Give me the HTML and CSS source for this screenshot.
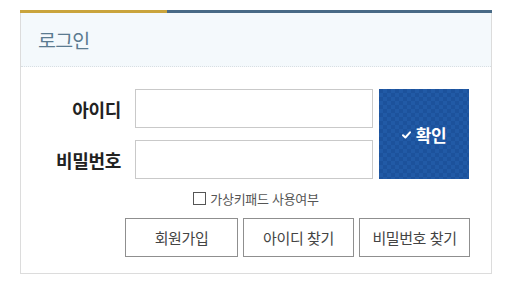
FILE: index.html
```html
<!DOCTYPE html>
<html lang="ko">
<head>
<meta charset="utf-8">
<title>로그인</title>
<link rel="stylesheet" href="styles.css">
</head>
<body>
<div class="box">
  <div class="topbar"></div>
  <div class="header"><h1 class="title">로그인</h1></div>
  <div class="body">
    <div class="form">
      <div class="fields">
        <label class="label" for="uid">아이디</label>
        <input class="input" id="uid" type="text">
        <label class="label" for="upw">비밀번호</label>
        <input class="input" id="upw" type="password">
      </div>
      <button class="submit" type="button"><svg class="check" width="9" height="8" viewBox="0 0 9 8"><path d="M1 4.2 L3.4 6.5 L8 1.3" fill="none" stroke="#fff" stroke-width="2" stroke-linecap="round" stroke-linejoin="round"/></svg>확인</button>
    </div>
    <div class="keypad">
      <span class="cb"></span><span class="cb-text">가상키패드 사용여부</span>
    </div>
    <div class="links">
      <button class="link-btn w1" type="button">회원가입</button>
      <button class="link-btn" type="button">아이디 찾기</button>
      <button class="link-btn" type="button">비밀번호 찾기</button>
    </div>
  </div>
</div>
</body>
</html>
```
FILE: styles.css
```css
html, body {
  margin: 0;
  padding: 0;
  background: #fff;
}
body {
  font-family: "Noto Sans CJK KR", "Noto Sans", sans-serif;
  padding: 10px 0 0 20px;
}
.box {
  width: 470px;
  border: 1px solid #dcdcdc;
  border-top: none;
}
.topbar {
  height: 3px;
  margin: 0 -1px;
  background: linear-gradient(to right, #c9a43c 0, #c9a43c 147px, #486a86 147px, #486a86 100%);
}
.header {
  height: 53px;
  background: #f4f9fc;
  border-bottom: 1px dotted #d9dfe3;
  display: flex;
  align-items: center;
  padding-left: 17px;
}
.title {
  margin: 0;
  font-size: 19.5px;
  font-weight: 400;
  color: #5b7b90;
  letter-spacing: -0.8px;
}
.body {
  padding: 22px 0 16px 0;
}
.form {
  display: flex;
  align-items: stretch;
  gap: 6px;
}
.fields {
  display: grid;
  grid-template-columns: 100px 238px;
  column-gap: 14px;
  row-gap: 12px;
  align-items: center;
}
.label {
  font-size: 18px;
  font-weight: 700;
  color: #222;
  text-align: right;
  letter-spacing: -0.3px;
}
.input {
  box-sizing: border-box;
  width: 238px;
  height: 39px;
  margin: 0;
  border: 1px solid #c9c9c9;
  background: #fff;
  outline: none;
}
.submit {
  width: 90px;
  margin: 0;
  border: none;
  color: #fff;
  font-family: inherit;
  font-size: 17px;
  font-weight: 700;
  background-color: #1e56a1;
  background-image: conic-gradient(#215aa6 25%, #1c529c 0 50%, #215aa6 0 75%, #1c529c 0);
  background-size: 8px 8px;
  display: flex;
  align-items: center;
  justify-content: center;
  gap: 5px;
  letter-spacing: -0.3px;
}
.check {
  display: block;
  margin-top: 2px;
}
.keypad {
  display: flex;
  justify-content: center;
  align-items: center;
  margin-top: 12px;
  height: 14px;
  gap: 4px;
}
.cb {
  width: 11px;
  height: 11px;
  border: 1px solid #555;
  background: #fff;
}
.cb-text {
  font-size: 13px;
  color: #555;
  letter-spacing: -0.3px;
}
.links {
  display: flex;
  justify-content: flex-end;
  gap: 5px;
  margin-top: 13px;
  padding-right: 21px;
}
.link-btn {
  width: 111px;
  height: 39px;
  margin: 0;
  padding: 0;
  border: 1px solid #8f8f8f;
  background: #fff;
  color: #444;
  font-family: inherit;
  font-size: 15px;
  letter-spacing: -0.4px;
}
.link-btn.w1 {
  width: 113px;
}
```
